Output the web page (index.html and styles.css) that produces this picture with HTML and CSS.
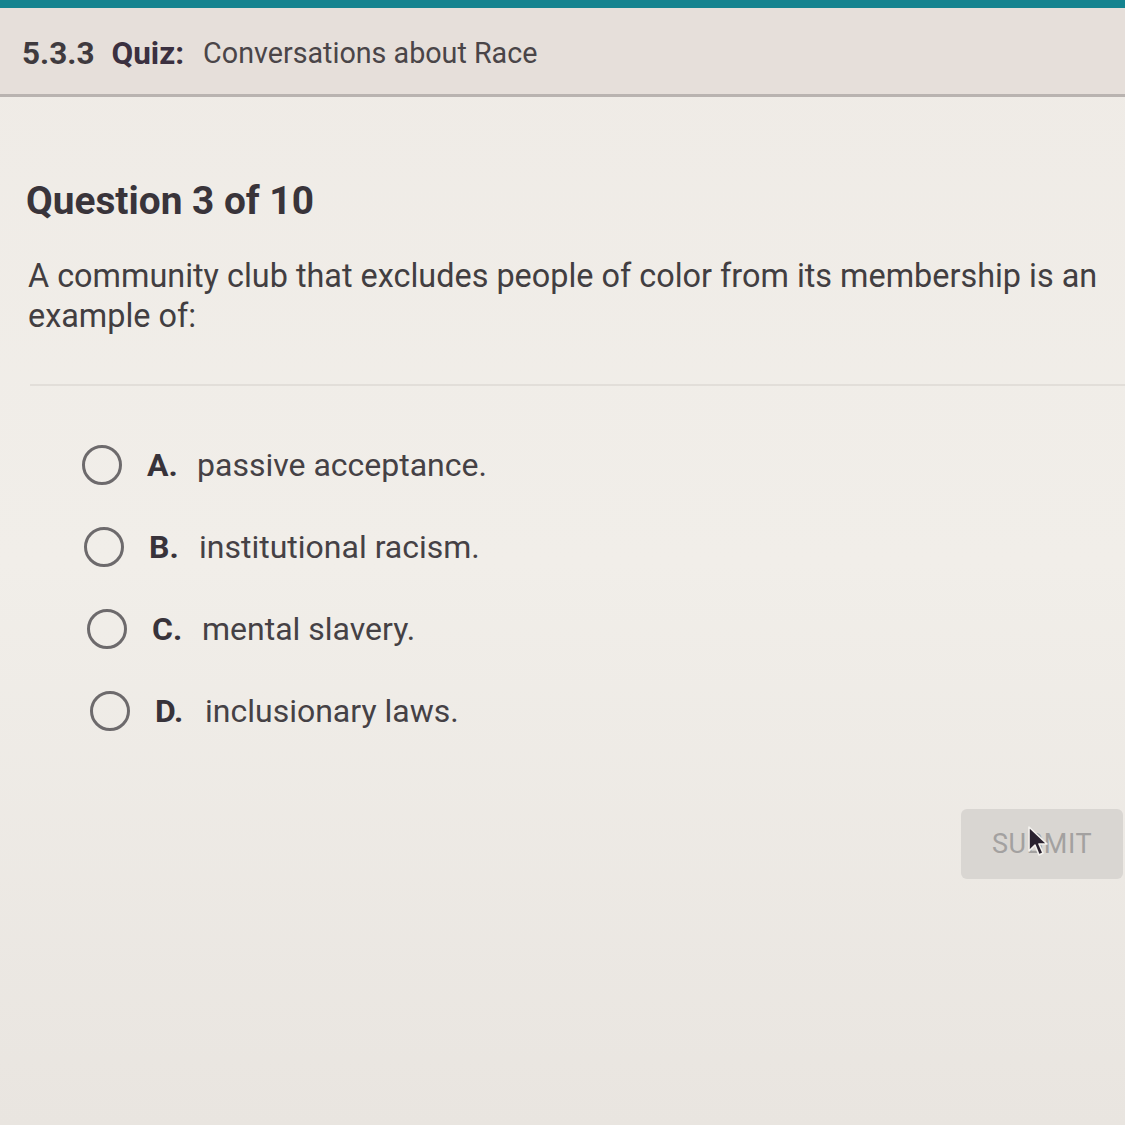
FILE: index.html
```html
<!DOCTYPE html>
<html>
<head>
<meta charset="utf-8">
<link rel="stylesheet" href="styles.css">
</head>
<body>
<div class="topbar"></div>
<header class="header">
  <span class="num">5.3.3</span>
  <span class="kind">Quiz:</span>
  <span class="title">Conversations about Race</span>
</header>
<main class="content">
  <h1 class="qnum">Question 3 of 10</h1>
  <p class="qtext">A community club that excludes people of color from its membership is an example of:</p>
  <hr class="divider">
  <ul class="options">
    <li class="option"><span class="radio"></span><span class="letter">A.</span><span class="answer">passive acceptance.</span></li>
    <li class="option"><span class="radio"></span><span class="letter">B.</span><span class="answer">institutional racism.</span></li>
    <li class="option"><span class="radio"></span><span class="letter">C.</span><span class="answer">mental slavery.</span></li>
    <li class="option"><span class="radio"></span><span class="letter">D.</span><span class="answer">inclusionary laws.</span></li>
  </ul>
  <div class="actions">
    <button class="submit">SUBMIT
      <svg class="cursor" width="22" height="32" viewBox="0 0 22 32"><path d="M2 1 L2 25 L8 19 L12 29 L16 27 L12 18 L20 18 Z" fill="#2a2230" stroke="#f4f2ee" stroke-width="1.6" stroke-linejoin="round"/></svg>
    </button>
  </div>
</main>
</body>
</html>
```
FILE: styles.css
```css
html, body {
  margin: 0;
  padding: 0;
}
body {
  width: 1125px;
  height: 1125px;
  overflow: hidden;
  background: linear-gradient(180deg, #efebe6 0%, #f1eee9 50%, #e9e5e0 100%);
  font-family: Roboto, "Liberation Sans", sans-serif;
  color: #3e3a3c;
}
.topbar {
  height: 8px;
  background: #14838f;
}
.header {
  height: 89px;
  box-sizing: border-box;
  background: #e6dfda;
  border-bottom: 3px solid #b9b3b0;
  display: flex;
  align-items: center;
  padding: 4px 0 0 22px;
  font-size: 29px;
  color: #4a4548;
}
.header .num {
  font-weight: 700;
  font-size: 31.5px;
  color: #3f3a3e;
}
.header .kind {
  font-weight: 700;
  font-size: 31.5px;
  color: #3b3040;
  margin-left: 17px;
}
.header .title {
  font-size: 28.7px;
  margin-left: 19px;
}
.content {
  padding: 0 0 0 26px;
}
.qnum {
  margin: 82px 0 0 0;
  font-size: 38.8px;
  font-weight: 700;
  color: #39343a;
  line-height: 44px;
}
.qtext {
  margin: 33px 0 0 2px;
  font-size: 32.4px;
  line-height: 40px;
  color: #423e41;
  width: 1095px;
}
.divider {
  margin: 48px 0 0 4px;
  border: none;
  border-top: 2px solid #e2ded9;
}
.options {
  list-style: none;
  margin: 38px 0 0 0;
  padding: 0;
}
.option {
  display: flex;
  align-items: center;
  height: 82px;
  font-size: 32px;
  color: #454145;
}
.option:nth-child(1) { padding-left: 56px; }
.option:nth-child(2) { padding-left: 58px; }
.option:nth-child(3) { padding-left: 61px; }
.option:nth-child(4) { padding-left: 64px; }
.radio {
  width: 40px;
  height: 40px;
  box-sizing: border-box;
  border: 3px solid #6d6a6c;
  border-radius: 50%;
  flex: none;
}
.letter {
  font-weight: 700;
  color: #38333a;
  margin-left: 25px;
  width: 50px;
}
.actions {
  display: flex;
  justify-content: flex-end;
  margin-top: 57px;
  padding-right: 2px;
}
.submit {
  position: relative;
  width: 162px;
  height: 70px;
  border: none;
  border-radius: 6px;
  background: #d9d6d2;
  color: #a3a1a0;
  font-family: Roboto, "Liberation Sans", sans-serif;
  font-size: 27px;
  letter-spacing: 0.5px;
}
.cursor {
  position: absolute;
  left: 66px;
  top: 17px;
}
```
